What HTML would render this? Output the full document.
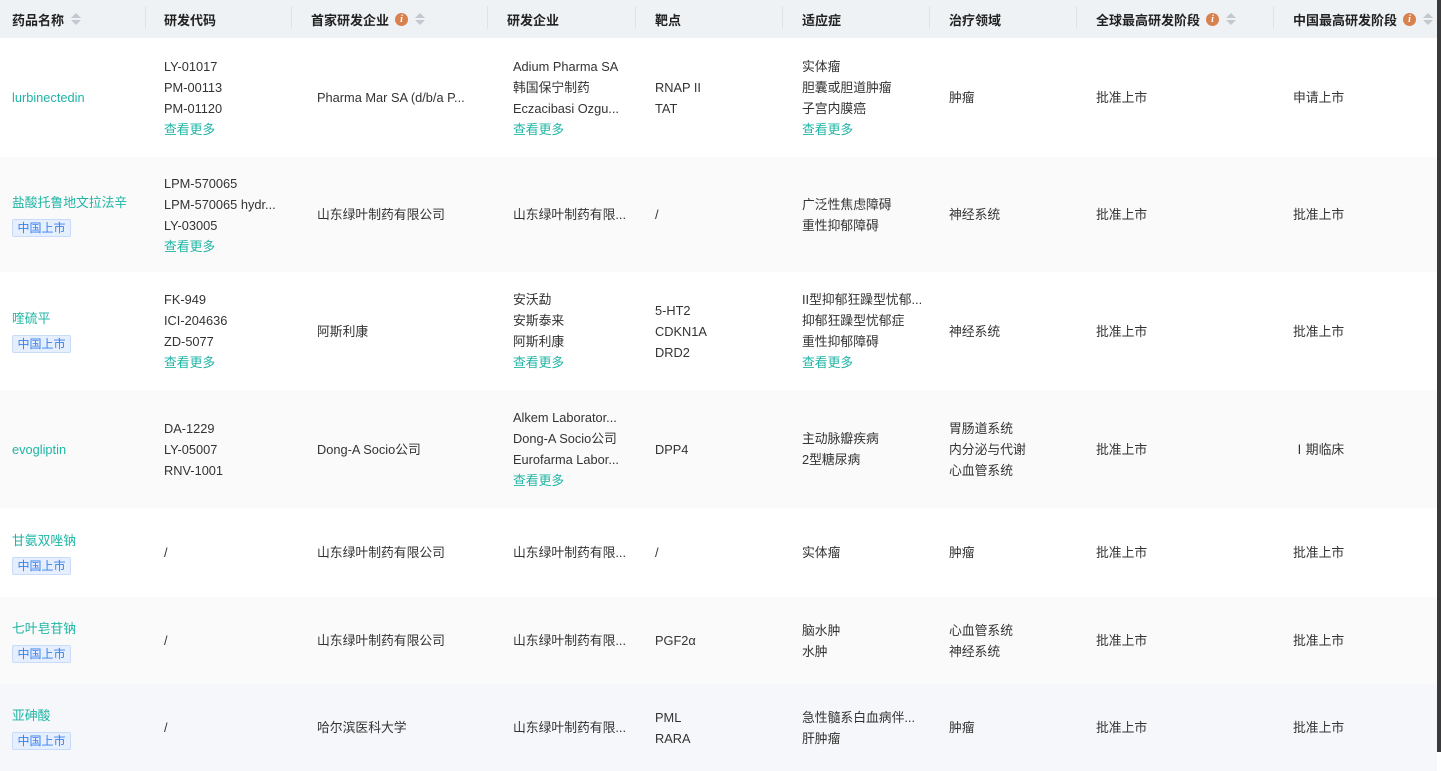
<!DOCTYPE html>
<html style="overflow:hidden;width:1441px;height:752px"><head><meta charset="utf-8">
<style>
*{margin:0;padding:0;box-sizing:border-box}
body{width:1441px;height:752px;overflow:hidden;background:#fff;font-family:"Liberation Sans","Noto Sans CJK SC",sans-serif;font-size:12.8px;color:#333}
.sb{position:absolute;left:1437px;top:0;width:4px;height:752px;background:#3a3a3a}
.hd{position:absolute;left:0;top:0;width:1437px;height:38px;background:#eef2f4}
.h{position:absolute;top:0;height:38px;display:flex;align-items:center;font-weight:bold;font-size:13px;color:#222}
.sep{position:absolute;top:6px;width:1px;height:23px;background:#dde4e6}
.i{display:inline-block;width:13px;height:13px;border-radius:50%;background:#d9804f;color:#fff;font-size:10px;font-style:italic;font-family:"Liberation Serif",serif;text-align:center;line-height:13px;margin-left:6px;font-weight:bold}
.s{display:inline-flex;flex-direction:column;margin-left:7px;gap:2px}
.s b{width:0;height:0;border-left:5px solid transparent;border-right:5px solid transparent}
.s b.u{border-bottom:5px solid #c3c7ce}.s b.d{border-top:5px solid #c3c7ce}
.r{position:absolute;left:0;width:1437px}
.c{position:absolute;top:0;height:100%;display:flex;flex-direction:column;justify-content:center;line-height:21px;white-space:nowrap}
.g{color:#1fb5a5}
.t{display:inline-block;margin-top:6px;width:59px;height:18px;line-height:16px;font-size:12px;color:#3a80f0;background:#e6effd;border:1px solid #c8dbfa;border-radius:2px;text-align:center}
</style></head><body>
<div class="hd">
<div class="h" style="left:12px">药品名称<span class="s"><b class="u"></b><b class="d"></b></span></div>
<div class="sep" style="left:145px"></div>
<div class="h" style="left:164px">研发代码</div>
<div class="sep" style="left:291px"></div>
<div class="h" style="left:311px">首家研发企业<span class="i">i</span><span class="s"><b class="u"></b><b class="d"></b></span></div>
<div class="sep" style="left:487px"></div>
<div class="h" style="left:507px">研发企业</div>
<div class="sep" style="left:635px"></div>
<div class="h" style="left:655px">靶点</div>
<div class="sep" style="left:782px"></div>
<div class="h" style="left:802px">适应症</div>
<div class="sep" style="left:929px"></div>
<div class="h" style="left:949px">治疗领域</div>
<div class="sep" style="left:1076px"></div>
<div class="h" style="left:1096px">全球最高研发阶段<span class="i">i</span><span class="s"><b class="u"></b><b class="d"></b></span></div>
<div class="sep" style="left:1273px"></div>
<div class="h" style="left:1293px">中国最高研发阶段<span class="i">i</span><span class="s"><b class="u"></b><b class="d"></b></span></div>
</div>

<div class="r" style="top:38px;height:119px;background:#fff">
<div class="c g" style="left:12px">lurbinectedin</div>
<div class="c" style="left:164px"><div>LY-01017</div><div>PM-00113</div><div>PM-01120</div><div class="g">查看更多</div></div>
<div class="c" style="left:317px">Pharma Mar SA (d/b/a P...</div>
<div class="c" style="left:513px"><div>Adium Pharma SA</div><div>韩国保宁制药</div><div>Eczacibasi Ozgu...</div><div class="g">查看更多</div></div>
<div class="c" style="left:655px"><div>RNAP II</div><div>TAT</div></div>
<div class="c" style="left:802px"><div>实体瘤</div><div>胆囊或胆道肿瘤</div><div>子宫内膜癌</div><div class="g">查看更多</div></div>
<div class="c" style="left:949px">肿瘤</div>
<div class="c" style="left:1096px">批准上市</div>
<div class="c" style="left:1293px">申请上市</div>
</div>

<div class="r" style="top:157px;height:115px;background:#fafafa">
<div class="c" style="left:12px"><div class="g">盐酸托鲁地文拉法辛</div><div><span class="t">中国上市</span></div></div>
<div class="c" style="left:164px"><div>LPM-570065</div><div>LPM-570065 hydr...</div><div>LY-03005</div><div class="g">查看更多</div></div>
<div class="c" style="left:317px">山东绿叶制药有限公司</div>
<div class="c" style="left:513px">山东绿叶制药有限...</div>
<div class="c" style="left:655px">/</div>
<div class="c" style="left:802px"><div>广泛性焦虑障碍</div><div>重性抑郁障碍</div></div>
<div class="c" style="left:949px">神经系统</div>
<div class="c" style="left:1096px">批准上市</div>
<div class="c" style="left:1293px">批准上市</div>
</div>

<div class="r" style="top:272px;height:118px;background:#fff">
<div class="c" style="left:12px"><div class="g">喹硫平</div><div><span class="t">中国上市</span></div></div>
<div class="c" style="left:164px"><div>FK-949</div><div>ICI-204636</div><div>ZD-5077</div><div class="g">查看更多</div></div>
<div class="c" style="left:317px">阿斯利康</div>
<div class="c" style="left:513px"><div>安沃勐</div><div>安斯泰来</div><div>阿斯利康</div><div class="g">查看更多</div></div>
<div class="c" style="left:655px"><div>5-HT2</div><div>CDKN1A</div><div>DRD2</div></div>
<div class="c" style="left:802px"><div>II型抑郁狂躁型忧郁...</div><div>抑郁狂躁型忧郁症</div><div>重性抑郁障碍</div><div class="g">查看更多</div></div>
<div class="c" style="left:949px">神经系统</div>
<div class="c" style="left:1096px">批准上市</div>
<div class="c" style="left:1293px">批准上市</div>
</div>

<div class="r" style="top:390px;height:118px;background:#fafafa">
<div class="c g" style="left:12px">evogliptin</div>
<div class="c" style="left:164px"><div>DA-1229</div><div>LY-05007</div><div>RNV-1001</div></div>
<div class="c" style="left:317px">Dong-A Socio公司</div>
<div class="c" style="left:513px"><div>Alkem Laborator...</div><div>Dong-A Socio公司</div><div>Eurofarma Labor...</div><div class="g">查看更多</div></div>
<div class="c" style="left:655px">DPP4</div>
<div class="c" style="left:802px"><div>主动脉瓣疾病</div><div>2型糖尿病</div></div>
<div class="c" style="left:949px"><div>胃肠道系统</div><div>内分泌与代谢</div><div>心血管系统</div></div>
<div class="c" style="left:1096px">批准上市</div>
<div class="c" style="left:1293px">Ⅰ期临床</div>
</div>

<div class="r" style="top:508px;height:89px;background:#fff">
<div class="c" style="left:12px"><div class="g">甘氨双唑钠</div><div><span class="t">中国上市</span></div></div>
<div class="c" style="left:164px">/</div>
<div class="c" style="left:317px">山东绿叶制药有限公司</div>
<div class="c" style="left:513px">山东绿叶制药有限...</div>
<div class="c" style="left:655px">/</div>
<div class="c" style="left:802px">实体瘤</div>
<div class="c" style="left:949px">肿瘤</div>
<div class="c" style="left:1096px">批准上市</div>
<div class="c" style="left:1293px">批准上市</div>
</div>

<div class="r" style="top:597px;height:87px;background:#fafafa">
<div class="c" style="left:12px"><div class="g">七叶皂苷钠</div><div><span class="t">中国上市</span></div></div>
<div class="c" style="left:164px">/</div>
<div class="c" style="left:317px">山东绿叶制药有限公司</div>
<div class="c" style="left:513px">山东绿叶制药有限...</div>
<div class="c" style="left:655px">PGF2α</div>
<div class="c" style="left:802px"><div>脑水肿</div><div>水肿</div></div>
<div class="c" style="left:949px"><div>心血管系统</div><div>神经系统</div></div>
<div class="c" style="left:1096px">批准上市</div>
<div class="c" style="left:1293px">批准上市</div>
</div>

<div class="r" style="top:684px;height:87px;background:#f5f7fa">
<div class="c" style="left:12px"><div class="g">亚砷酸</div><div><span class="t">中国上市</span></div></div>
<div class="c" style="left:164px">/</div>
<div class="c" style="left:317px">哈尔滨医科大学</div>
<div class="c" style="left:513px">山东绿叶制药有限...</div>
<div class="c" style="left:655px"><div>PML</div><div>RARA</div></div>
<div class="c" style="left:802px"><div>急性髓系白血病伴...</div><div>肝肿瘤</div></div>
<div class="c" style="left:949px">肿瘤</div>
<div class="c" style="left:1096px">批准上市</div>
<div class="c" style="left:1293px">批准上市</div>
</div>
<div class="sb"></div>
</body></html>
